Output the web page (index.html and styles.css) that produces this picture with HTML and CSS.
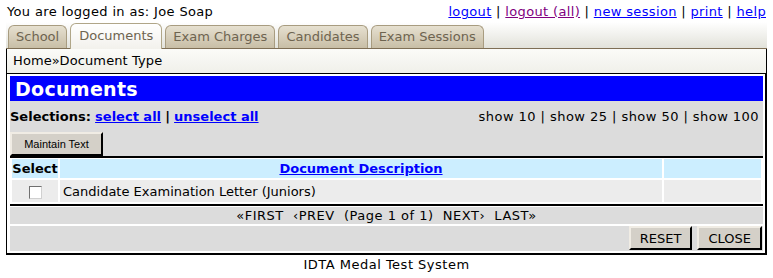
FILE: index.html
```html
<!DOCTYPE html>
<html lang="en">
<head>
    <meta charset="UTF-8">
    <title>IDTA Medal Test System - Documents</title>
    <link rel="stylesheet" href="styles.css">
</head>
<body>
    <div class="topbar">
        <span>You are logged in as: Joe Soap</span>
        <span class="toplinks">
            <a href="#">logout</a> | <a href="#" class="visited">logout (all)</a> | <a href="#">new session</a> | <a href="#">print</a> | <a href="#">help</a>
        </span>
    </div>

    <!-- Pestañas -->
    <div class="tabs">
        <a href="#" class="tab">School</a>
        <a href="#" class="tab active">Documents</a>
        <a href="#" class="tab">Exam Charges</a>
        <a href="#" class="tab">Candidates</a>
        <a href="#" class="tab">Exam Sessions</a>
    </div>

    <div class="crumbs">Home»Document Type</div>

    <div class="panel">
        <div class="panel-title">Documents</div>

        <div class="selections">
            <div class="sel-row">
                <span><b>Selections:</b> <a href="#">select all</a> <b>|</b> <a href="#">unselect all</a></span>
                <span class="shows">show 10 | show 25 | show 50 | show 100</span>
            </div>
            <button class="btn-small">Maintain Text</button>
        </div>

        <table class="grid">
            <thead>
                <tr>
                    <th class="col-select">Select</th>
                    <th><a href="#">Document Description</a></th>
                    <th class="col-extra"></th>
                </tr>
            </thead>
            <tbody>
                <tr>
                    <td class="col-select"><span class="checkbox"></span></td>
                    <td>Candidate Examination Letter (Juniors)</td>
                    <td></td>
                </tr>
            </tbody>
        </table>

        <div class="pager">«FIRST&nbsp; ‹PREV&nbsp; (Page 1 of 1)&nbsp; NEXT›&nbsp; LAST»</div>

        <div class="actions">
            <button class="btn">RESET</button>
            <button class="btn">CLOSE</button>
        </div>
    </div>

    <div class="footer">IDTA Medal Test System</div>
</body>
</html>
```

FILE: styles.css
```css
body {
    font-family: "DejaVu Sans", Verdana, sans-serif;
    font-size: 13px;
    color: #000;
    background-color: #fff;
    margin: 0;
    padding: 4px 6px 0 6px;
}

a {
    color: #0000ff;
}

a.visited {
    color: #800080;
}

.topbar {
    display: flex;
    justify-content: space-between;
    padding-left: 1px;
    height: 18px;
    line-height: 16px;
    letter-spacing: 0.35px;
}

.toplinks {
    padding-right: 1px;
}

/* Pestañas */
.tabs {
    display: flex;
    align-items: flex-end;
    gap: 3px;
    height: 26px;
    padding-left: 2px;
    background: linear-gradient(#ffffff, #e2e2da);
    border-bottom: 1px solid #7f6f55;
}

.tab {
    display: block;
    height: 23px;
    line-height: 22px;
    padding: 0 7px;
    color: #6e6450;
    text-decoration: none;
    background: linear-gradient(#e6e0d0, #c8bea6);
    border: 1px solid #a89c80;
    border-bottom: none;
    border-radius: 6px 6px 0 0;
    box-sizing: border-box;
}

.tab.active {
    height: 26px;
    line-height: 24px;
    padding: 0 8px;
    background: linear-gradient(#ffffff, #f2f1ec);
    border-color: #b0a688;
    margin-bottom: -1px;
}

.crumbs {
    height: 24px;
    line-height: 23px;
    padding-left: 6px;
    letter-spacing: 0.1px;
    background: linear-gradient(#fbfbf8, #f0f0ea);
    border-left: 1px solid #000;
    border-right: 1px solid #000;
    border-bottom: 1px solid #000;
}

.panel {
    border: 2px solid #000;
    border-top: none;
    border-left-width: 1px;
    padding: 2px 2px 2px 3px;
    background-color: #fff;
}

.panel-title {
    background-color: #0000ff;
    color: #fff;
    font-weight: bold;
    font-size: 19px;
    height: 25px;
    line-height: 26px;
    padding-left: 5px;
    letter-spacing: 0.3px;
}

.selections {
    background-color: #dcdcdc;
    padding: 2px 0 0 0;
    border-bottom: 2px solid #000;
}

.sel-row {
    display: flex;
    justify-content: space-between;
    height: 29px;
    line-height: 28px;
    padding: 0 4px 0 0;
}

.sel-row a {
    font-weight: bold;
}

.shows {
    letter-spacing: 0.45px;
}

.btn-small {
    display: block;
    font-family: "Liberation Sans", Arial, sans-serif;
    font-size: 11px;
    width: 93px;
    height: 24px;
    margin: 0;
    background-color: #d4d0c8;
    border: 2px outset #f0ece4;
    border-right-color: #404040;
    border-bottom-color: #404040;
    color: #000;
    padding: 0;
}

.grid {
    width: 100%;
    border-collapse: separate;
    border-spacing: 2px;
    margin-top: -1px;
    border-bottom: 2px solid #000;
}

.grid th {
    background-color: #cceeff;
    height: 19px;
    padding: 0;
    font-weight: bold;
}

.grid th a {
    color: #0000ff;
}

.grid td {
    background-color: #ececec;
    height: 22px;
    padding: 0 3px;
}

.col-select {
    width: 46px;
    text-align: center;
}

.grid td.col-select {
    padding: 0;
}

.col-extra {
    width: 97px;
}

.checkbox {
    display: inline-block;
    width: 11px;
    height: 11px;
    border: 1px solid #707070;
    border-right-color: #d0d0d0;
    border-bottom-color: #d0d0d0;
    background-color: #fff;
    vertical-align: middle;
}

.pager {
    background-color: #dcdcdc;
    text-align: center;
    height: 17px;
    line-height: 17px;
    margin-top: 1px;
    letter-spacing: 0.5px;
    border-bottom: 2px solid #fff;
}

.actions {
    display: flex;
    justify-content: flex-end;
    gap: 5px;
    background-color: #dcdcdc;
    padding: 0 1px 1px 0;
}

.btn {
    font-family: "DejaVu Sans", Verdana, sans-serif;
    font-size: 13px;
    height: 24px;
    padding: 0 9px;
    background-color: #d4d0c8;
    border: 2px outset #f0ece4;
    border-right-color: #404040;
    border-bottom-color: #404040;
    color: #000;
}

.footer {
    text-align: center;
    padding-top: 2px;
    letter-spacing: 0.5px;
}
```
